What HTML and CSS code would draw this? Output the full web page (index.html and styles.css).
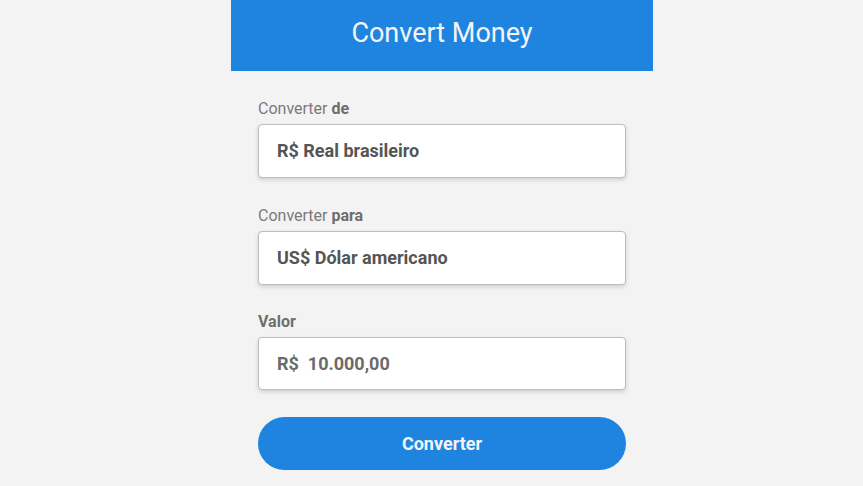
FILE: index.html
```html
<!DOCTYPE html>
<html lang="pt-BR">
<head>
<meta charset="utf-8">
<title>Convert Money</title>
<link rel="stylesheet" href="styles.css">
</head>
<body>
<main class="app">
  <header class="app-header">
    <h1 class="app-title">Convert Money</h1>
  </header>
  <form class="form">
    <div class="field">
      <label class="label">Converter <b>de</b></label>
      <div class="box">R$ Real brasileiro</div>
    </div>
    <div class="field field-tight">
      <label class="label">Converter <b>para</b></label>
      <div class="box">US$ Dólar americano</div>
    </div>
    <div class="field field-tight">
      <label class="label"><b>Valor</b></label>
      <div class="box box-value">R$&nbsp; 10.000,00</div>
    </div>
    <button type="button" class="btn">Converter</button>
  </form>
</main>
</body>
</html>
```
FILE: styles.css
```css
* { box-sizing: border-box; }
html, body { margin: 0; padding: 0; }
body {
  background: #f3f3f3;
  font-family: Roboto, "Liberation Sans", sans-serif;
  height: 486px;
  overflow: hidden;
}
.app {
  width: 422px;
  margin-left: 231px;
}
.app-header {
  height: 71px;
  background: #1e84e0;
  display: flex;
  align-items: center;
  justify-content: center;
}
.app-title {
  margin: 0;
  font-size: 27px;
  font-weight: 400;
  color: #f4f4f8;
  line-height: 1;
  position: relative;
  top: -2px;
}
.form {
  padding: 28px 27px 0;
  display: flex;
  flex-direction: column;
}
.field {
  display: flex;
  flex-direction: column;
  gap: 5px;
  margin-bottom: 28px;
}
.field-tight { margin-bottom: 27px; }
.label {
  font-size: 16px;
  line-height: 20px;
  color: #7a7a7a;
}
.label b { color: #6e6e6e; font-weight: 700; }
.box {
  height: 54px;
  background: #fff;
  border: 1px solid #bdbdbd;
  border-radius: 4px;
  box-shadow: 0 2px 4px rgba(0,0,0,0.15);
  display: flex;
  align-items: center;
  padding-left: 18px;
  padding-bottom: 1px;
  font-size: 18px;
  font-weight: 700;
  color: #555;
}
.box-value { height: 53px; color: #6b6b6b; }
.btn {
  height: 53px;
  border: 0;
  border-radius: 27px;
  background: #1e84e0;
  color: #f4f4f8;
  font-family: Roboto, "Liberation Sans", sans-serif;
  font-size: 18px;
  font-weight: 700;
  cursor: pointer;
}
```
